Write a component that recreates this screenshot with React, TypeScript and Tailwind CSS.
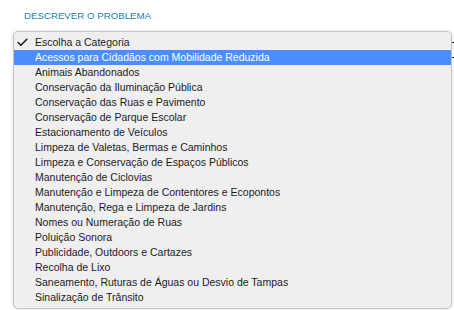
import { Check } from 'lucide-react'

const categories = [
  'Acessos para Cidadãos com Mobilidade Reduzida',
  'Animais Abandonados',
  'Conservação da Iluminação Pública',
  'Conservação das Ruas e Pavimento',
  'Conservação de Parque Escolar',
  'Estacionamento de Veículos',
  'Limpeza de Valetas, Bermas e Caminhos',
  'Limpeza e Conservação de Espaços Públicos',
  'Manutenção de Ciclovias',
  'Manutenção e Limpeza de Contentores e Ecopontos',
  'Manutenção, Rega e Limpeza de Jardins',
  'Nomes ou Numeração de Ruas',
  'Poluição Sonora',
  'Publicidade, Outdoors e Cartazes',
  'Recolha de Lixo',
  'Saneamento, Ruturas de Águas ou Desvio de Tampas',
  'Sinalização de Trânsito',
]

export default function App() {
  return (
    <div className="w-[454px] h-[310px] bg-white relative overflow-hidden" style={{ fontFamily: '"Liberation Sans", Arial, sans-serif' }}>
      <div className="pt-[10px] pl-[24px] text-[9.7px] leading-[12px] text-[#1a7fac]">
        DESCREVER O PROBLEMA
      </div>

      {/* select border peeking from behind the open menu */}
      <div className="absolute left-[452px] top-[42px] w-[2px] h-[1px] bg-[#222]" />
      <div className="absolute left-[452px] top-[57px] w-[2px] h-[1px] bg-[#222]" />

      <div className="absolute left-[13px] top-[31px] w-[439px] h-[278px] bg-[#efefef] border border-[#c4c4c4] rounded-[5px] shadow-[0_0_4px_rgba(0,0,0,0.12)] pt-[3px] text-[10.5px] text-[#1c1c1c]">
        <div className="flex items-center h-[15px]">
          <span className="w-[21px] pl-[2px] flex items-center">
            <Check className="w-[13px] h-[13px]" strokeWidth={3} />
          </span>
          <span>Escolha a Categoria</span>
        </div>
        {categories.map((c, i) => (
          <div
            key={c}
            className={
              i === 0
                ? 'flex items-center h-[15px] pl-[21px] bg-[#4a8ffd] text-white'
                : 'flex items-center h-[15px] pl-[21px]'
            }
          >
            {c}
          </div>
        ))}
      </div>
    </div>
  )
}
